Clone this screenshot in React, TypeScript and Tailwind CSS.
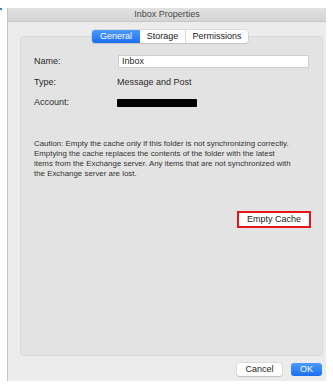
import React from "react";

export default function App() {
  const font = { fontFamily: '"Liberation Sans", Arial, sans-serif' };
  return (
    <div className="w-[333px] h-[388px] bg-white relative overflow-hidden" style={font}>
      <div className="absolute left-0 top-[8px] w-[2px] h-[2px] bg-[#3b7fd8]" />
      <div className="ml-[7px] mt-[8px] w-[319px] h-[373px] bg-[#ececec] border-l border-[#c4c4c4] flex flex-col">
        {/* title bar */}
        <div className="h-[14px] shrink-0 bg-gradient-to-b from-[#e2e2e2] to-[#d4d4d4] border-b border-[#c8c8c8] flex items-center justify-center text-[9px] text-[#4a4a4a]">
          Inbox Properties
        </div>
        {/* tabs */}
        <div className="relative z-10 mt-[8px] flex justify-center pl-[13px] pr-[3px]">
          <div className="flex h-[13px] rounded-[3px] shadow-[0_0_0_0.5px_#c8c8c8,0_1px_1px_rgba(0,0,0,0.15)] text-[9px] ml-[-4px]">
            <div className="w-[48px] flex items-center justify-center rounded-l-[3px] bg-gradient-to-b from-[#4c9bfb] to-[#1a6ff0] text-white">
              General
            </div>
            <div className="w-[46px] flex items-center justify-center bg-white text-[#222] border-r border-[#d8d8d8]">
              Storage
            </div>
            <div className="w-[62px] flex items-center justify-center rounded-r-[3px] bg-white text-[#222]">
              Permissions
            </div>
          </div>
        </div>
        {/* panel */}
        <div className="ml-[12px] mr-[3px] mt-[-7px] h-[320px] rounded-[4px] bg-[#e3e3e3] border border-[#dadada] pl-[13px] pr-[13px] pt-[18px] flex flex-col text-[#2a2a2a]">
          <div className="flex items-center h-[13px] text-[9px]">
            <div className="w-[84px]">Name:</div>
            <div className="flex-1 h-[13px] bg-white border border-[#cfcfcf] flex items-center pl-[3px]">Inbox</div>
          </div>
          <div className="flex items-center h-[13px] mt-[8px] text-[9px]">
            <div className="w-[83px]">Type:</div>
            <div>Message and Post</div>
          </div>
          <div className="flex items-center h-[13px] mt-[7px] text-[9px]">
            <div className="w-[83px]">Account:</div>
            <div className="w-[80px] h-[8px] bg-black rounded-[1px]" />
          </div>
          <div className="mt-[30px] text-[7.9px] leading-[10px] text-[#333]">
            <div className="whitespace-nowrap">Caution: Empty the cache only if this folder is not synchronizing correctly.</div>
            <div className="whitespace-nowrap">Emptying the cache replaces the contents of the folder with the latest</div>
            <div className="whitespace-nowrap">items from the Exchange server. Any items that are not synchronized with</div>
            <div className="whitespace-nowrap">the Exchange server are lost.</div>
          </div>
          <div className="mt-[32px] flex justify-end mr-[-2px]">
            <div className="w-[74px] h-[17px] border-2 border-[#e8141c] bg-white flex items-center justify-center text-[9px] text-[#222]">
              Empty Cache
            </div>
          </div>
        </div>
        {/* bottom buttons */}
        <div className="mt-[7px] flex justify-end gap-[9px] pr-[4px]">
          <div className="w-[45px] h-[13px] rounded-[3px] bg-white shadow-[0_0_0_0.5px_#c8c8c8,0_1px_1px_rgba(0,0,0,0.2)] flex items-center justify-center text-[9px] text-[#222]">
            Cancel
          </div>
          <div className="w-[31px] h-[13px] rounded-[3px] bg-gradient-to-b from-[#4c9bfb] to-[#1a6ff0] flex items-center justify-center text-[9px] text-white">
            OK
          </div>
        </div>
      </div>
    </div>
  );
}
